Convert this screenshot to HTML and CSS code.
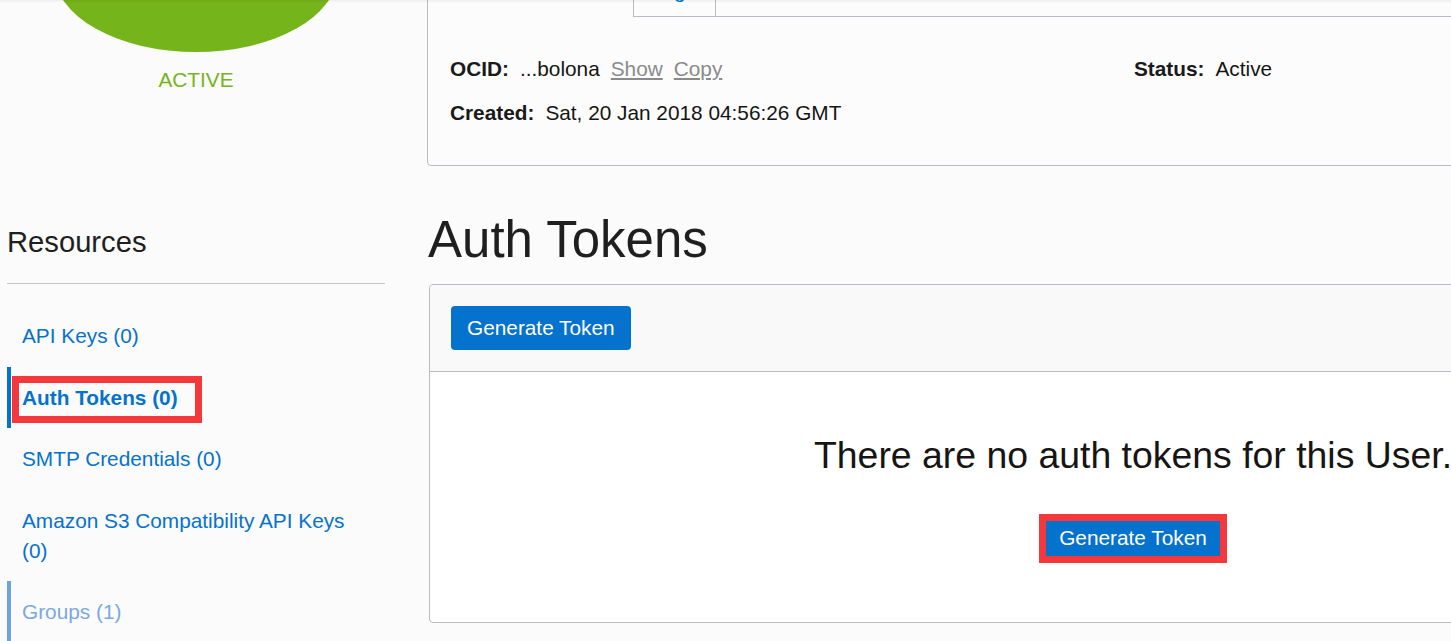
FILE: index.html
```html
<!DOCTYPE html>
<html lang="en">
<head>
<meta charset="utf-8">
<title>Auth Tokens</title>
<link rel="stylesheet" href="styles.css">
</head>
<body>
<div class="topshade"></div>
<div class="page">
  <aside class="side">
    <div class="avatar"></div>
    <div class="state">ACTIVE</div>
    <h2 class="res-title">Resources</h2>
    <ul class="res-nav">
      <li class="res-item">API Keys (0)</li>
      <li class="res-item active"><span class="annot">Auth Tokens (0)</span></li>
      <li class="res-item">SMTP Credentials (0)</li>
      <li class="res-item">Amazon S3 Compatibility API Keys (0)</li>
      <li class="res-item dim">Groups (1)</li>
    </ul>
  </aside>
  <main class="main">
    <section class="detail-card">
      <div class="tabs">
        <div class="tab tab-active">User Information</div>
        <div class="tab tab-tags">Tags</div>
        <div class="tab-fill"></div>
      </div>
      <div class="details">
        <div class="field"><span class="label">OCID:</span><span class="value">...bolona</span><a class="link">Show</a><a class="link">Copy</a></div>
        <div class="field"><span class="label">Status:</span><span class="value">Active</span></div>
        <div class="field"><span class="label">Created:</span><span class="value">Sat, 20 Jan 2018 04:56:26 GMT</span></div>
      </div>
    </section>
    <h1 class="page-title">Auth Tokens</h1>
    <section class="list-card">
      <div class="list-head"><button class="btn">Generate Token</button></div>
      <div class="list-empty">
        <p class="empty-text">There are no auth tokens for this User.</p>
        <span class="annot-wrap"><button class="btn">Generate Token</button></span>
      </div>
    </section>
  </main>
</div>
</body>
</html>
```
FILE: styles.css
```css
html, body {
  margin: 0;
  overflow: hidden;
  background: #fbfbfc;
  font-family: "Liberation Sans", Arial, sans-serif;
  color: #161513;
}

.topshade {
  position: fixed;
  top: 0;
  left: 0;
  right: 0;
  height: 3px;
  background: linear-gradient(rgba(0, 0, 0, 0.05), rgba(0, 0, 0, 0));
  z-index: 5;
}

.page {
  display: flex;
  gap: 42px;
  padding-left: 7px;
  width: max-content;
}

/* ---------- left column ---------- */
.side {
  width: 378px;
  flex-shrink: 0;
}

.avatar {
  width: 284px;
  height: 160px;
  border-radius: 50%;
  background: #76b41b;
  margin: -108px auto 0;
}

.state {
  margin-top: 16px;
  text-align: center;
  color: #76b41b;
  font-size: 20.8px;
  line-height: 24px;
}

.res-title {
  margin: 133px 0 0;
  padding-bottom: 24px;
  border-bottom: 1px solid #c5c6ca;
  font-size: 29.2px;
  line-height: 34px;
  font-weight: normal;
  color: #1f1f1f;
}

.res-nav {
  list-style: none;
  margin: 21px 0 0;
  padding: 0;
}

.res-item {
  border-left: 4px solid transparent;
  padding: 16px 30px 15.5px 11px;
  font-size: 20.8px;
  line-height: 30px;
  color: #0572ce;
}

.res-item.active {
  border-left-color: #0572ce;
  font-weight: bold;
}

.res-item.dim {
  border-left-color: #6fa3e0;
  color: #7aa9e0;
}

.annot {
  position: relative;
  display: inline-block;
}

.annot::after {
  content: "";
  position: absolute;
  top: -7px;
  left: -10px;
  right: -24px;
  bottom: -10px;
  border: 7px solid #f5383b;
}

/* ---------- main column ---------- */
.main {
  width: 1410px;
  flex-shrink: 0;
}

.detail-card {
  margin-top: -41px;
  border: 1px solid #b9bdc3;
  border-radius: 4px;
  background: #fcfcfd;
}

.tabs {
  display: flex;
}

.tab {
  font-size: 20.8px;
  line-height: 24px;
  padding: 19px 19px 13px 18px;
  color: #0572ce;
}

.tab-active {
  width: 205px;
  box-sizing: border-box;
  text-align: center;
}

.tab-tags {
  border-left: 1px solid #b9bdc3;
  border-right: 1px solid #b9bdc3;
  border-bottom: 1px solid #b9bdc3;
}

.tab-fill {
  flex: 1;
  border-bottom: 1px solid #b9bdc3;
}

.details {
  display: grid;
  grid-template-columns: 684px 1fr;
  row-gap: 20px;
  padding: 40px 22px 40px;
  font-size: 20.8px;
  line-height: 24px;
}

.label {
  font-weight: bold;
  margin-right: 11px;
  color: #1a1a1a;
}

.link {
  color: #8a8a8a;
  text-decoration: underline;
  margin-left: 11px;
}

.page-title {
  margin: 43px 0 14px 1px;
  font-size: 51px;
  line-height: 61px;
  font-weight: normal;
  color: #1f1f1f;
}

.list-card {
  margin-left: 2px;
  border: 1px solid #b9bdc3;
  border-radius: 4px;
  background: #ffffff;
}

.list-head {
  display: flex;
  padding: 21px;
  background: #f9f9fa;
  border-bottom: 1px solid #b9bdc3;
  border-radius: 4px 4px 0 0;
}

.btn {
  height: 44px;
  padding: 0 16px;
  border: none;
  border-radius: 4px;
  background: #0572ce;
  color: #ffffff;
  font-family: inherit;
  font-size: 20.8px;
  line-height: 44px;
}

.list-empty {
  display: flex;
  flex-direction: column;
  align-items: center;
  padding: 61px 0 62px;
}

.empty-text {
  margin: 0 0 39px;
  font-size: 37.4px;
  line-height: 44px;
  white-space: nowrap;
}

.annot-wrap {
  position: relative;
  display: flex;
}

.annot-wrap::after {
  content: "";
  position: absolute;
  top: -2px;
  bottom: -3px;
  left: -4px;
  right: -4px;
  border: 7px solid #f5383b;
}
```
